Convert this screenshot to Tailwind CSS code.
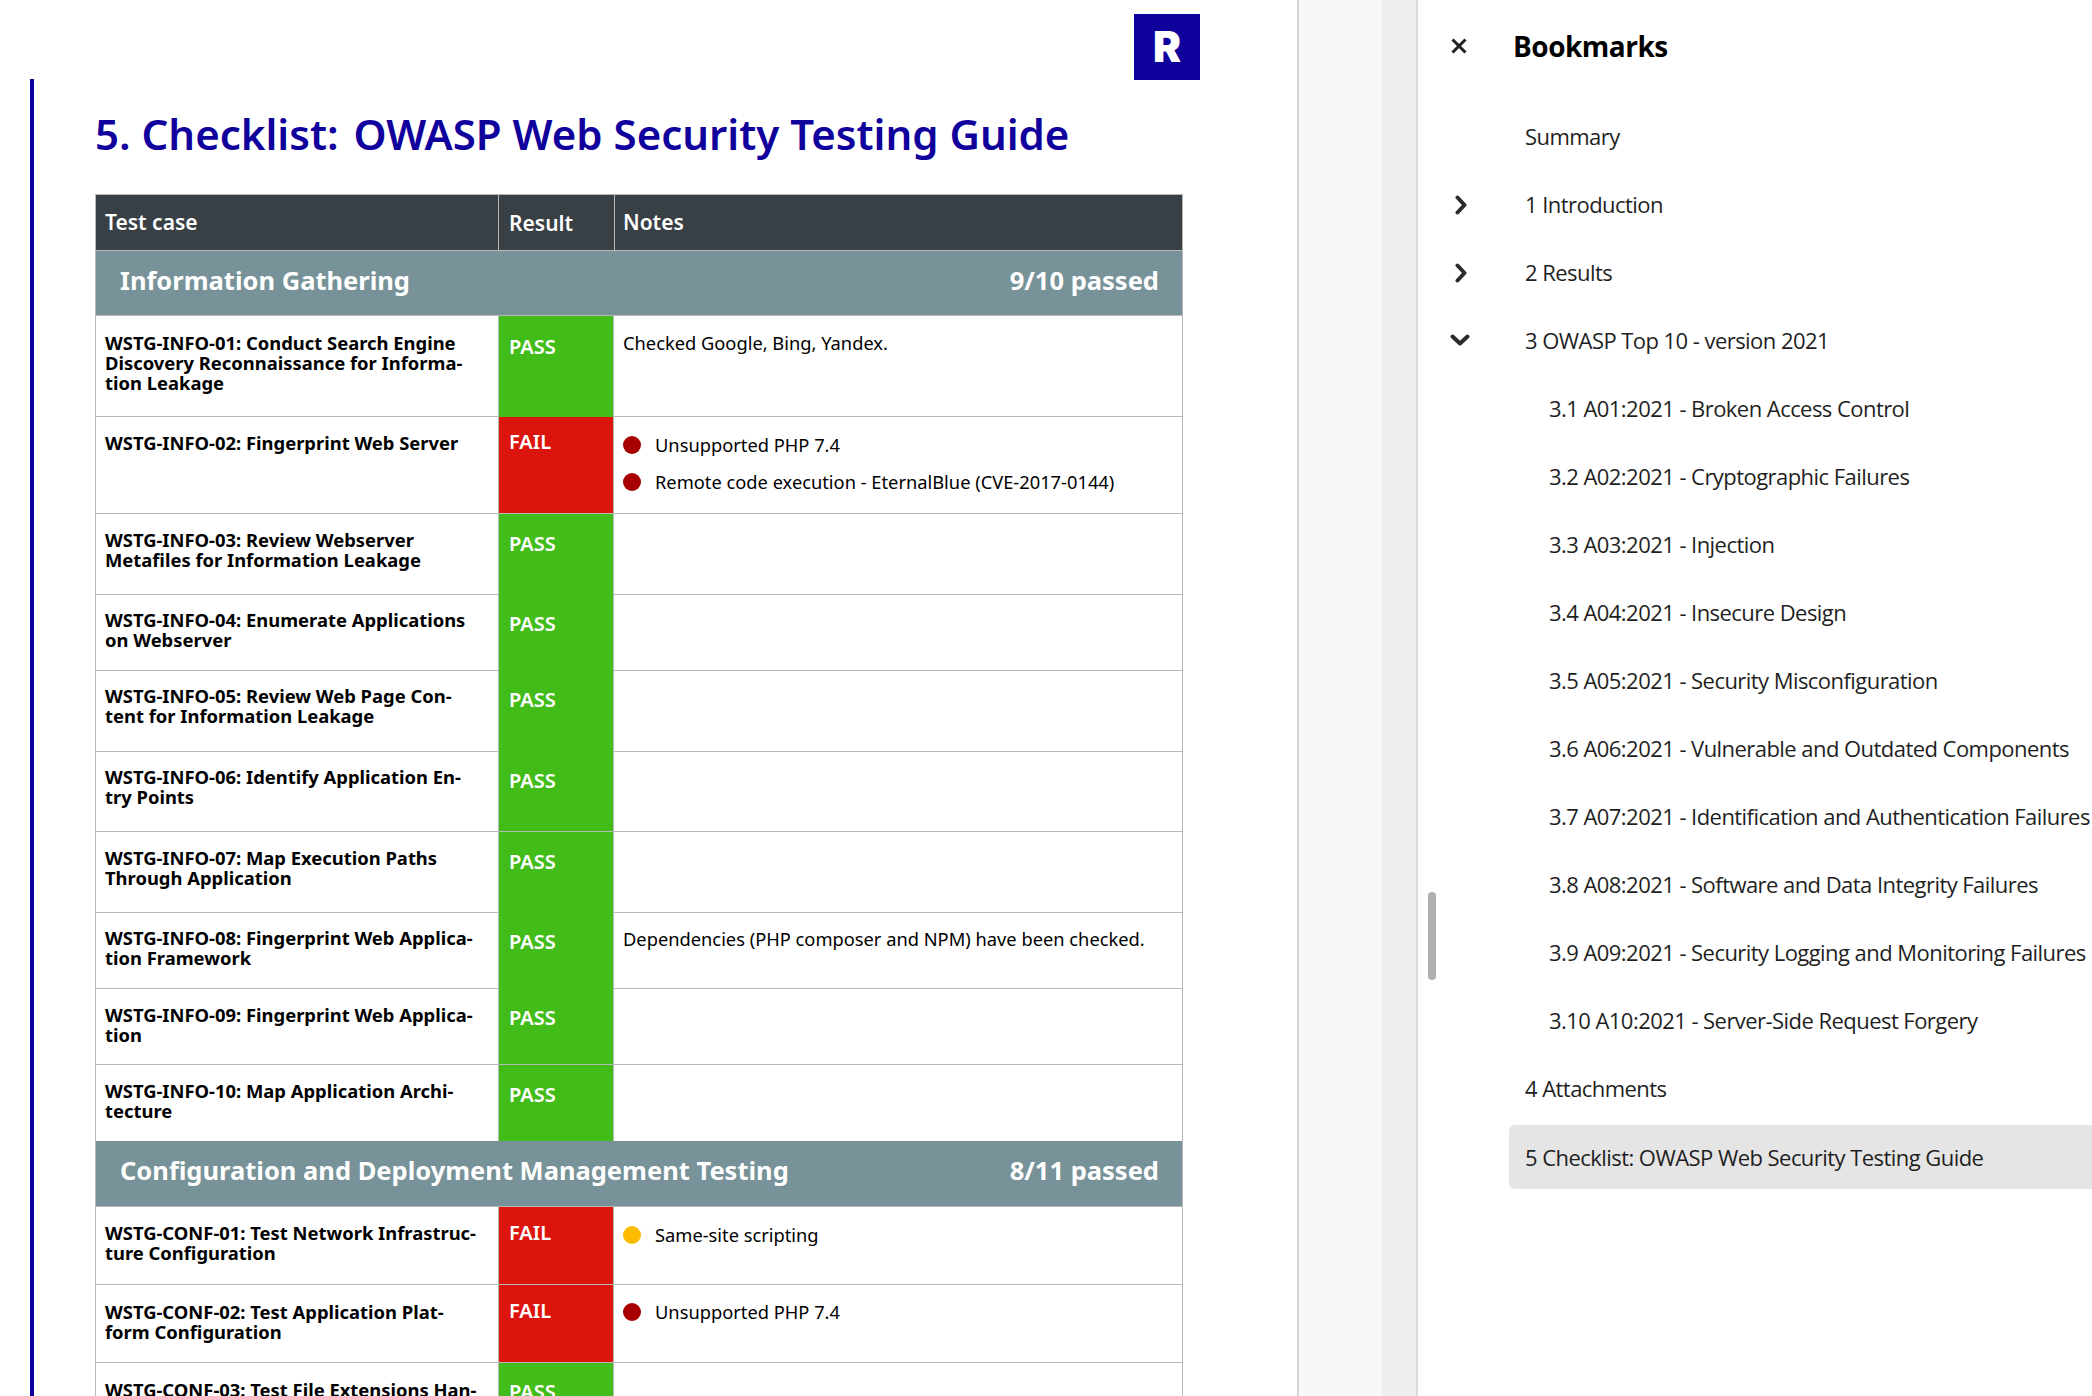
<!DOCTYPE html>
<html lang="en">
<head>
    <meta charset="UTF-8">
    <title>Report - Bookmarks</title>
    <script src="https://cdn.jsdelivr.net/npm/@tailwindcss/browser@4"></script>
</head>
<body class="bg-white overflow-hidden font-['Noto_Sans',sans-serif]">
<div class="flex w-[2092px] h-[1396px] overflow-hidden">
    <!-- Document page -->
    <main class="relative w-[1297px] h-full overflow-hidden bg-white">
        <div class="absolute left-[1134px] top-[14px] w-[66px] h-[66px] bg-[#10009c] flex items-center justify-center">
            <span class="font-['Inter',sans-serif] font-black text-[42px] leading-none text-white">R</span>
        </div>
        <div class="mt-[79px] ml-[30px] pl-[61px] border-l-4 border-[#10009c] h-[1317px]">
            <h1 class="text-[42px] leading-[56px] font-semibold text-[#10009c] pt-[27px] mb-[32px] whitespace-nowrap">5. Checklist: <span class="ml-[4px]">OWASP Web Security Testing Guide</span></h1>
            <table class="w-[1088px] table-fixed border-separate border-spacing-0 text-[18.3px] leading-[20px] text-black">
                <colgroup><col class="w-[403px]"><col class="w-[116px]"><col></colgroup>
                <thead>
                    <tr class="bg-[#383f45] text-white text-[21px]">
                        <th class="h-[57px] border border-r-0 border-[#b8b8b8] pl-[9px] pb-[1px] text-left font-semibold">Test case</th>
                        <th class="border-y border-l border-[#b8b8b8] pl-[10px] pt-[1px] text-left font-semibold">Result</th>
                        <th class="border border-[#b8b8b8] pl-[8px] pb-[1px] text-left font-semibold">Notes</th>
                    </tr>
                </thead>
                <tbody>
                    <tr class="bg-[#779298] text-white text-[25.5px] font-bold">
                        <td colspan="3" class="h-[65px] border-x border-b border-[#b8b8b8] pl-[24px] pr-[23px] pb-[7px]">
                            <div class="flex justify-between"><span>Information Gathering</span><span>9/10 passed</span></div>
                        </td>
                    </tr>
                    <tr>
                        <td class="h-[101px] align-top border-l border-b border-[#b8b8b8] pl-[9px] pr-[10px] pt-[17px] text-[18.4px] font-bold">WSTG-INFO-01: Conduct Search Engine Discovery Reconnaissance for Informa-<br>tion Leakage</td>
                        <td class="align-top bg-[#42bc19] border-x border-[#b8b8b8] pl-[10px] pt-[21px] text-white text-[20px] font-semibold">PASS</td>
                        <td class="align-top border-r border-b border-[#b8b8b8] px-[9px] pt-[17px]">Checked Google, Bing, Yandex.</td>
                    </tr>
                    <tr>
                        <td class="h-[97px] align-top border-l border-b border-[#b8b8b8] pl-[9px] pr-[10px] pt-[16px] text-[18.4px] font-bold">WSTG-INFO-02: Fingerprint Web Server</td>
                        <td class="align-top bg-[#dc140e] border-x border-b border-[#b8b8b8] pl-[10px] pt-[15px] text-white text-[20px] font-semibold">FAIL</td>
                        <td class="align-top border-r border-b border-[#b8b8b8] px-[9px] pt-[18px]">
                            <div class="flex items-center gap-[14px]"><span class="w-[18px] h-[18px] rounded-full bg-[#a80000]"></span><span>Unsupported PHP 7.4</span></div>
                            <div class="flex items-center gap-[14px] mt-[17px]"><span class="w-[18px] h-[18px] rounded-full bg-[#a80000]"></span><span>Remote code execution - EternalBlue (CVE-2017-0144)</span></div>
                        </td>
                    </tr>
                    <tr>
                        <td class="h-[81px] align-top border-l border-b border-[#b8b8b8] pl-[9px] pr-[10px] pt-[16px] text-[18.4px] font-bold">WSTG-INFO-03: Review Webserver Metafiles for Information Leakage</td>
                        <td class="align-top bg-[#42bc19] border-x border-[#b8b8b8] pl-[10px] pt-[20px] text-white text-[20px] font-semibold">PASS</td>
                        <td class="align-top border-r border-b border-[#b8b8b8]"></td>
                    </tr>
                    <tr>
                        <td class="h-[76px] align-top border-l border-b border-[#b8b8b8] pl-[9px] pr-[10px] pt-[15px] text-[18.4px] font-bold">WSTG-INFO-04: Enumerate Applications on Webserver</td>
                        <td class="align-top bg-[#42bc19] border-x border-[#b8b8b8] pl-[10px] pt-[19px] text-white text-[20px] font-semibold">PASS</td>
                        <td class="align-top border-r border-b border-[#b8b8b8]"></td>
                    </tr>
                    <tr>
                        <td class="h-[81px] align-top border-l border-b border-[#b8b8b8] pl-[9px] pr-[10px] pt-[15px] text-[18.4px] font-bold">WSTG-INFO-05: Review Web Page Con-<br>tent for Information Leakage</td>
                        <td class="align-top bg-[#42bc19] border-x border-[#b8b8b8] pl-[10px] pt-[19px] text-white text-[20px] font-semibold">PASS</td>
                        <td class="align-top border-r border-b border-[#b8b8b8]"></td>
                    </tr>
                    <tr>
                        <td class="h-[80px] align-top border-l border-b border-[#b8b8b8] pl-[9px] pr-[10px] pt-[15px] text-[18.4px] font-bold">WSTG-INFO-06: Identify Application En-<br>try Points</td>
                        <td class="align-top bg-[#42bc19] border-x border-b border-[#b8b8b8] pl-[10px] pt-[19px] text-white text-[20px] font-semibold">PASS</td>
                        <td class="align-top border-r border-b border-[#b8b8b8]"></td>
                    </tr>
                    <tr>
                        <td class="h-[81px] align-top border-l border-b border-[#b8b8b8] pl-[9px] pr-[10px] pt-[16px] text-[18.4px] font-bold">WSTG-INFO-07: Map Execution Paths Through Application</td>
                        <td class="align-top bg-[#42bc19] border-x border-[#b8b8b8] pl-[10px] pt-[20px] text-white text-[20px] font-semibold">PASS</td>
                        <td class="align-top border-r border-b border-[#b8b8b8]"></td>
                    </tr>
                    <tr>
                        <td class="h-[76px] align-top border-l border-b border-[#b8b8b8] pl-[9px] pr-[10px] pt-[15px] text-[18.4px] font-bold">WSTG-INFO-08: Fingerprint Web Applica-<br>tion Framework</td>
                        <td class="align-top bg-[#42bc19] border-x border-[#b8b8b8] pl-[10px] pt-[19px] text-white text-[20px] font-semibold">PASS</td>
                        <td class="align-top border-r border-b border-[#b8b8b8] px-[9px] pt-[16px]">Dependencies (PHP composer and NPM) have been checked.</td>
                    </tr>
                    <tr>
                        <td class="h-[76px] align-top border-l border-b border-[#b8b8b8] pl-[9px] pr-[10px] pt-[16px] text-[18.4px] font-bold">WSTG-INFO-09: Fingerprint Web Applica-<br>tion</td>
                        <td class="align-top bg-[#42bc19] border-x border-b border-[#b8b8b8] pl-[10px] pt-[19px] text-white text-[20px] font-semibold">PASS</td>
                        <td class="align-top border-r border-b border-[#b8b8b8]"></td>
                    </tr>
                    <tr>
                        <td class="h-[76px] align-top border-l border-[#b8b8b8] pl-[9px] pr-[10px] pt-[16px] text-[18.4px] font-bold">WSTG-INFO-10: Map Application Archi-<br>tecture</td>
                        <td class="align-top bg-[#42bc19] border-x border-[#b8b8b8] pl-[10px] pt-[20px] text-white text-[20px] font-semibold">PASS</td>
                        <td class="align-top border-r border-[#b8b8b8]"></td>
                    </tr>
                    <tr class="bg-[#779298] text-white text-[25.5px] font-bold">
                        <td colspan="3" class="h-[66px] border-x border-b border-[#b8b8b8] pl-[24px] pr-[23px] pb-[8px]">
                            <div class="flex justify-between"><span>Configuration and Deployment Management Testing</span><span>8/11 passed</span></div>
                        </td>
                    </tr>
                    <tr>
                        <td class="h-[78px] align-top border-l border-b border-[#b8b8b8] pl-[9px] pr-[10px] pt-[16px] text-[18.4px] font-bold">WSTG-CONF-01: Test Network Infrastruc-<br>ture Configuration</td>
                        <td class="align-top bg-[#dc140e] border-x border-b border-[#b8b8b8] pl-[10px] pt-[16px] text-white text-[20px] font-semibold">FAIL</td>
                        <td class="align-top border-r border-b border-[#b8b8b8] px-[9px] pt-[18px]">
                            <div class="flex items-center gap-[14px]"><span class="w-[18px] h-[18px] rounded-full bg-[#ffbb00]"></span><span>Same-site scripting</span></div>
                        </td>
                    </tr>
                    <tr>
                        <td class="h-[78px] align-top border-l border-b border-[#b8b8b8] pl-[9px] pr-[10px] pt-[17px] text-[18.4px] font-bold">WSTG-CONF-02: Test Application Plat-<br>form Configuration</td>
                        <td class="align-top bg-[#dc140e] border-x border-b border-[#b8b8b8] pl-[10px] pt-[16px] text-white text-[20px] font-semibold">FAIL</td>
                        <td class="align-top border-r border-b border-[#b8b8b8] px-[9px] pt-[17px]">
                            <div class="flex items-center gap-[14px]"><span class="w-[18px] h-[18px] rounded-full bg-[#a80000]"></span><span>Unsupported PHP 7.4</span></div>
                        </td>
                    </tr>
                    <tr>
                        <td class="h-[78px] align-top border-l border-b border-[#b8b8b8] pl-[9px] pr-[10px] pt-[17px] text-[18.4px] font-bold">WSTG-CONF-03: Test File Extensions Han-</td>
                        <td class="align-top bg-[#42bc19] border-x border-[#b8b8b8] pl-[10px] pt-[19px] text-white text-[20px] font-semibold">PASS</td>
                        <td class="align-top border-r border-b border-[#b8b8b8]"></td>
                    </tr>
                </tbody>
            </table>
        </div>
    </main>

    <!-- Viewer gutter -->
    <div class="w-[85px] h-full border-l-2 border-[#d4d4d4] bg-[#f8f8f8]"></div>
    <div class="w-[36px] h-full border-r-2 border-[#dadada] bg-[#efefef]"></div>

    <!-- Bookmarks panel -->
    <aside class="relative flex-1 h-full bg-white overflow-hidden text-[#1f1f1f] font-['Open_Sans',sans-serif]">
        <div class="absolute left-[10px] top-[892px] w-[8px] h-[88px] rounded bg-[#b1b1b1]"></div>
        <div class="flex items-center h-[92px]">
            <svg class="ml-[32px] w-[18px] h-[18px]" viewBox="0 0 18 18" fill="none" stroke="#222" stroke-width="3" stroke-linecap="butt"><path d="M2.5 2.5l13 13M15.5 2.5l-13 13"/></svg>
            <h2 class="ml-[45px] text-[28px] font-bold tracking-[-0.5px] text-black whitespace-nowrap">Bookmarks</h2>
        </div>
        <ul class="text-[22px] leading-[68px] whitespace-nowrap tracking-[-0.55px]">
            <li class="pl-[107px] h-[68px] mt-[10px]">Summary</li>
            <li class="relative pl-[107px] h-[68px]">
                <svg class="absolute left-[36px] top-[25px] w-[14px] h-[20px]" viewBox="0 0 14 20" fill="none" stroke="#2c2c2c" stroke-width="4" stroke-linecap="round" stroke-linejoin="round"><path d="M3.5 2.5l7 7.5-7 7.5"/></svg>
                1 Introduction</li>
            <li class="relative pl-[107px] h-[68px]">
                <svg class="absolute left-[36px] top-[25px] w-[14px] h-[20px]" viewBox="0 0 14 20" fill="none" stroke="#2c2c2c" stroke-width="4" stroke-linecap="round" stroke-linejoin="round"><path d="M3.5 2.5l7 7.5-7 7.5"/></svg>
                2 Results</li>
            <li class="relative pl-[107px] h-[68px]">
                <svg class="absolute left-[32px] top-[27px] w-[20px] h-[14px]" viewBox="0 0 20 14" fill="none" stroke="#2c2c2c" stroke-width="4" stroke-linecap="round" stroke-linejoin="round"><path d="M2.5 3.5l7.5 7 7.5-7"/></svg>
                3 OWASP Top 10 - version 2021</li>
            <li class="pl-[131px] h-[68px]">3.1 A01:2021 - Broken Access Control</li>
            <li class="pl-[131px] h-[68px]">3.2 A02:2021 - Cryptographic Failures</li>
            <li class="pl-[131px] h-[68px]">3.3 A03:2021 - Injection</li>
            <li class="pl-[131px] h-[68px]">3.4 A04:2021 - Insecure Design</li>
            <li class="pl-[131px] h-[68px]">3.5 A05:2021 - Security Misconfiguration</li>
            <li class="pl-[131px] h-[68px]">3.6 A06:2021 - Vulnerable and Outdated Components</li>
            <li class="pl-[131px] h-[68px]">3.7 A07:2021 - Identification and Authentication Failures</li>
            <li class="pl-[131px] h-[68px]">3.8 A08:2021 - Software and Data Integrity Failures</li>
            <li class="pl-[131px] h-[68px]">3.9 A09:2021 - Security Logging and Monitoring Failures</li>
            <li class="pl-[131px] h-[68px]">3.10 A10:2021 - Server-Side Request Forgery</li>
            <li class="pl-[107px] h-[68px]">4 Attachments</li>
            <li class="ml-[91px] mt-[3px] pl-[16px] h-[64px] leading-[64px] rounded-l-[6px] bg-[#e5e5e5]">5 Checklist: OWASP Web Security Testing Guide</li>
        </ul>
    </aside>
</div>
</body>
</html>
